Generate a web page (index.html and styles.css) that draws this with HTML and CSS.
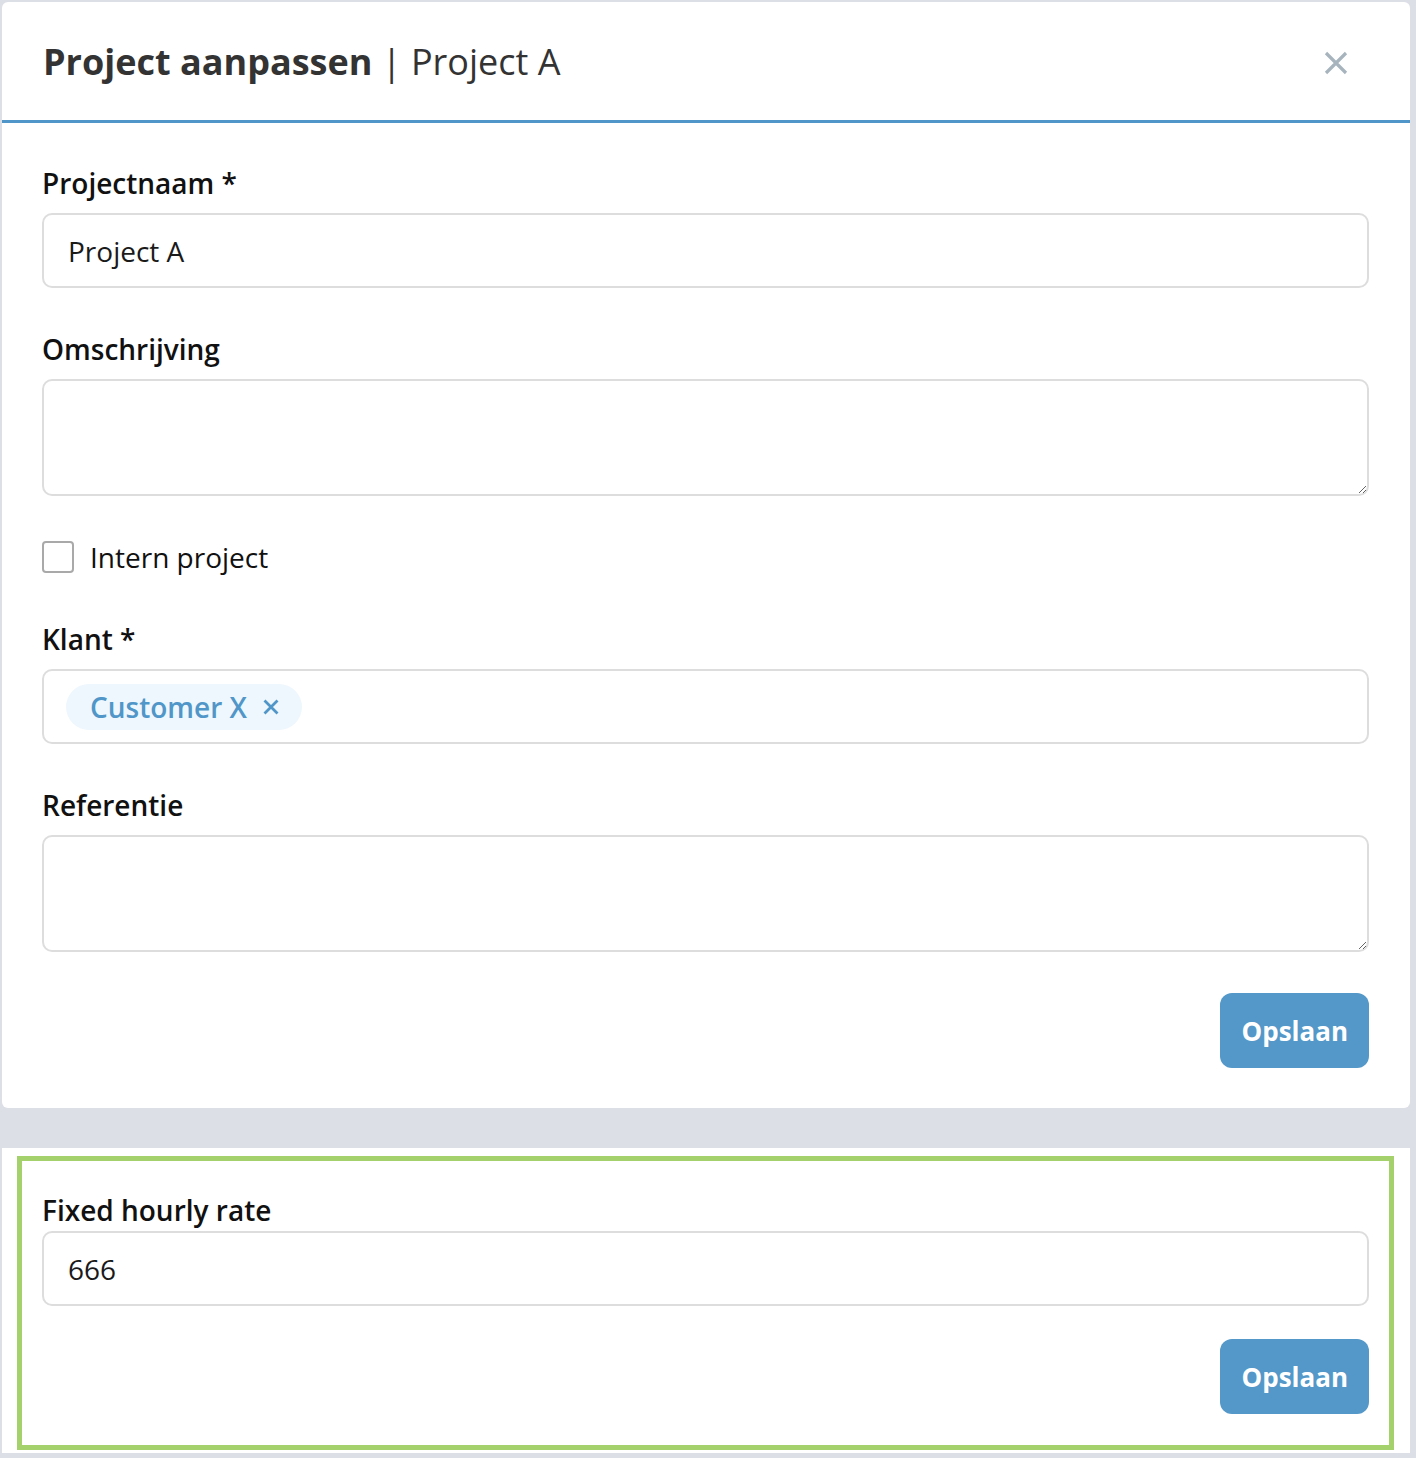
FILE: index.html
```html
<!DOCTYPE html>
<html lang="nl">
<head>
<meta charset="utf-8">
<title>Project aanpassen</title>
<link rel="stylesheet" href="styles.css">
</head>
<body>
<div class="page">
  <section class="card">
    <header class="card-header">
      <h1 class="title"><strong>Project aanpassen</strong> <span class="sep">|</span> <span class="sub">Project A</span></h1>
      <button class="close" aria-label="Sluiten">
        <svg width="24" height="24" viewBox="0 0 24 24"><path d="M2 2 L22 22 M22 2 L2 22" stroke="#a7b4bd" stroke-width="3.2" stroke-linecap="butt" fill="none"/></svg>
      </button>
    </header>
    <form class="card-body">
      <div class="field">
        <label class="label">Projectnaam *</label>
        <input class="input" type="text" value="Project A">
      </div>
      <div class="field">
        <label class="label">Omschrijving</label>
        <textarea class="textarea"></textarea>
      </div>
      <div class="check-row">
        <span class="checkbox"></span>
        <span class="check-label">Intern project</span>
      </div>
      <div class="field">
        <label class="label">Klant *</label>
        <div class="select">
          <span class="tag">Customer X
            <svg class="tag-x" width="16" height="16" viewBox="0 0 16 16"><path d="M1.5 1.5 L14.5 14.5 M14.5 1.5 L1.5 14.5" stroke="#5096c8" stroke-width="2.8" fill="none"/></svg>
          </span>
        </div>
      </div>
      <div class="field">
        <label class="label">Referentie</label>
        <textarea class="textarea"></textarea>
      </div>
      <div class="actions">
        <button type="button" class="btn">Opslaan</button>
      </div>
    </form>
  </section>

  <section class="panel">
    <div class="highlight">
      <label class="label label-tight">Fixed hourly rate</label>
      <input class="input" type="text" value="666">
      <div class="actions actions-2">
        <button type="button" class="btn">Opslaan</button>
      </div>
    </div>
  </section>
</div>
</body>
</html>
```

FILE: styles.css
```css
* { box-sizing: border-box; }

html, body {
  margin: 0;
  padding: 0;
  background: #dcdfe6;
}

body {
  font-family: "Open Sans", "Liberation Sans", sans-serif;
  color: #111;
}

.page {
  padding: 2px 6px 5px 2px;
}

.card {
  background: #fff;
  border-radius: 6px;
}

.card-header {
  height: 121px;
  border-bottom: 3px solid #5096c8;
  display: flex;
  align-items: center;
  justify-content: space-between;
  padding: 0 62px 0 41px;
}

.title {
  margin: 0;
  font-size: 36px;
  line-height: 1.2;
  font-weight: 400;
  color: #333;
  padding-top: 2px;
}

.title strong { font-weight: 700; }
.title .sep { font-weight: 400; }

.close {
  border: 0;
  background: none;
  padding: 0;
  width: 24px;
  height: 24px;
  display: flex;
  margin-top: 4px;
}

.card-body {
  padding: 42px 41px 40px 40px;
  display: flex;
  flex-direction: column;
}

.field {
  display: flex;
  flex-direction: column;
  margin-bottom: 43px;
}

.label {
  display: block;
  font-size: 28px;
  line-height: 36px;
  font-weight: 600;
  color: #111;
  margin-bottom: 12px;
}

.label-tight { margin-bottom: 3px; }

.input {
  height: 75px;
  width: 100%;
  border: 2px solid #dddddd;
  border-radius: 10px;
  padding: 0 24px;
  font-family: "Open Sans", "Liberation Sans", sans-serif;
  font-size: 28px;
  color: #1a1a1a;
  background: #fff;
  outline: none;
}

.textarea {
  height: 117px;
  width: 100%;
  border: 2px solid #dddddd;
  border-radius: 10px;
  padding: 12px 24px;
  font-family: "Open Sans", "Liberation Sans", sans-serif;
  font-size: 28px;
  background: #fff;
  outline: none;
  display: block;
  resize: vertical;
}

.check-row {
  display: flex;
  align-items: center;
  height: 36px;
  margin-bottom: 46px;
}

.checkbox {
  width: 32px;
  height: 32px;
  border: 2px solid #a9a9a9;
  border-radius: 4px;
  margin-right: 16px;
}

.check-label {
  font-size: 28px;
  line-height: 36px;
  color: #111;
}

.select {
  height: 75px;
  border: 2px solid #dddddd;
  border-radius: 10px;
  padding: 0 22px;
  display: flex;
  align-items: center;
}

.tag {
  display: inline-flex;
  align-items: center;
  height: 46px;
  padding: 0 23px 0 24px;
  border-radius: 23px;
  background: #eef7fd;
  color: #5096c8;
  font-size: 28px;
  font-weight: 600;
}

.tag-x { margin-left: 16px; }

.actions {
  display: flex;
  justify-content: flex-end;
  margin-top: -2px;
}

.btn {
  height: 75px;
  padding: 0 21px;
  border: 0;
  border-radius: 12px;
  background: #5398c8;
  color: #fff;
  font-family: "Open Sans", "Liberation Sans", sans-serif;
  font-size: 26px;
  font-weight: 700;
}

.panel {
  margin-top: 40px;
  background: #fff;
  padding: 8px 16px 3px 15px;
}

.highlight {
  border: 5px solid #a4d16c;
  padding: 31px 20px 31px 20px;
}

.actions-2 { margin-top: 33px; }
```
